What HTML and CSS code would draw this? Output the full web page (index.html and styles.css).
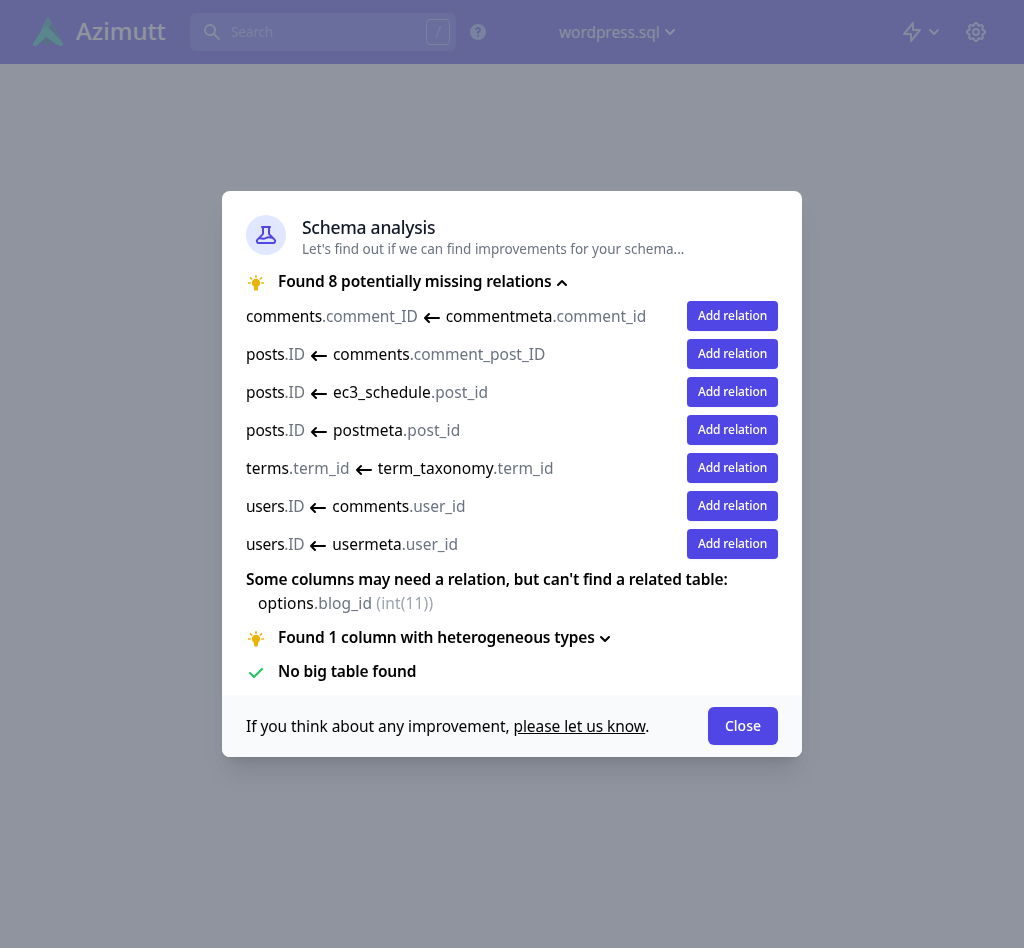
FILE: index.html
```html
<!DOCTYPE html>
<html lang="en">
<head>
<meta charset="utf-8">
<title>Azimutt</title>
<link rel="stylesheet" href="styles.css">
</head>
<body>
<svg class="defs" aria-hidden="true">
  <symbol id="chevron-down" viewBox="0 0 20 20"><path d="M5.293 7.293a1 1 0 011.414 0L10 10.586l3.293-3.293a1 1 0 111.414 1.414l-4 4a1 1 0 01-1.414 0l-4-4a1 1 0 010-1.414z"/></symbol>
  <symbol id="chevron-up" viewBox="0 0 20 20"><path d="M14.707 12.707a1 1 0 01-1.414 0L10 9.414l-3.293 3.293a1 1 0 01-1.414-1.414l4-4a1 1 0 011.414 0l4 4a1 1 0 010 1.414z"/></symbol>
  <symbol id="arrow" viewBox="0 0 20 20"><path d="M7.707 14.707a1 1 0 01-1.414 0l-4-4a1 1 0 010-1.414l4-4a1 1 0 011.414 1.414L5.414 9H17a1 1 0 110 2H5.414l2.293 2.293a1 1 0 010 1.414z"/></symbol>
  <symbol id="bulb" viewBox="0 0 20 20"><circle cx="10" cy="10" r="4.200"/><path d="M8 13h4v3.500a1 1 0 01-1 1H9a1 1 0 01-1-1z"/><path d="M10 2.700v1.600M2.500 10h1.700M15.800 10h1.700M4.500 4.800l1.100 1.100M15.500 4.800l-1.100 1.100" fill="none" stroke="currentColor" stroke-width="1.600" stroke-linecap="round"/></symbol>
</svg>

<nav class="navbar">
  <div class="brand">
    <svg class="logo" viewBox="0 0 32 32"><path fill="#2c9cac" d="M14 3.500Q16 -.5 18 3.500L31 27Q32 30.500 28.500 30L20 25.500L9 13Z"/><path fill="#2470a0" d="M19.500 7L29 24L15 11.500L18 11Z"/><path fill="#2468a0" d="M9 27.500L15 19L23 27Q16 29.500 9 27.500Z"/><path fill="#28c4b4" d="M1 27.500L10 13.500Q13 9 17 12L28 24Q31 28 30.500 30Q25 30 20 25L14 21L5 29.500Q0 31 1 27.500Z"/></svg>
    <span>Azimutt</span>
  </div>
  <div class="search">
    <svg class="i20" viewBox="0 0 20 20"><path fill-rule="evenodd" d="M8 4a4 4 0 100 8 4 4 0 000-8zM2 8a6 6 0 1110.89 3.476l4.817 4.817a1 1 0 01-1.414 1.414l-4.816-4.816A6 6 0 012 8z"/></svg>
    <span class="hint">Search</span>
    <kbd>/</kbd>
  </div>
  <svg class="i20 help" viewBox="0 0 20 20"><path fill-rule="evenodd" d="M18 10a8 8 0 11-16 0 8 8 0 0116 0zm-8-3a1 1 0 00-.867.5 1 1 0 11-1.731-1A3 3 0 0113 8a3.001 3.001 0 01-2 2.830V11a1 1 0 11-2 0v-1a1 1 0 011-1 1 1 0 100-2zm0 8a1 1 0 100-2 1 1 0 000 2z"/></svg>
  <div class="project"><span>wordpress.sql</span><svg class="i20"><use href="#chevron-down"/></svg></div>
  <div class="actions">
    <svg class="i24 line" viewBox="0 0 24 24"><path d="M13 10V3L4 14h7v7l9-11h-7z"/></svg>
    <svg class="i20"><use href="#chevron-down"/></svg>
    <svg class="i24 line cog" viewBox="0 0 24 24"><path d="M10.325 4.317c.426-1.756 2.924-1.756 3.350 0a1.724 1.724 0 002.573 1.066c1.543-.94 3.310.826 2.370 2.370a1.724 1.724 0 001.065 2.572c1.756.426 1.756 2.924 0 3.350a1.724 1.724 0 00-1.066 2.573c.94 1.543-.826 3.310-2.370 2.370a1.724 1.724 0 00-2.572 1.065c-.426 1.756-2.924 1.756-3.350 0a1.724 1.724 0 00-2.573-1.066c-1.543.94-3.310-.826-2.370-2.370a1.724 1.724 0 00-1.065-2.572c-1.756-.426-1.756-2.924 0-3.350a1.724 1.724 0 001.066-2.573c-.94-1.543.826-3.310 2.370-2.370.996.608 2.296.07 2.572-1.065z"/><path d="M15 12a3 3 0 11-6 0 3 3 0 016 0z"/></svg>
  </div>
</nav>

<div class="overlay">
  <section class="modal" role="dialog" aria-label="Schema analysis">
    <div class="content">
      <header class="heading">
        <div class="badge"><svg class="i24 line" viewBox="0 0 24 24"><path d="M19.428 15.428a2 2 0 00-1.022-.547l-2.387-.477a6 6 0 00-3.860.517l-.318.158a6 6 0 01-3.860.517L6.050 15.210a2 2 0 00-1.806.547M8 4h8l-1 1v5.172a2 2 0 00.586 1.414l5 5c1.260 1.260.367 3.414-1.415 3.414H4.828c-1.782 0-2.674-2.154-1.414-3.414l5-5A2 2 0 009 10.172V5L8 4z"/></svg></div>
        <div>
          <h3>Schema analysis</h3>
          <p>Let's find out if we can find improvements for your schema...</p>
        </div>
      </header>

      <h4 class="result first"><svg class="i20 warn"><use href="#bulb"/></svg><span>Found 8 potentially missing relations</span><svg class="i20 chev"><use href="#chevron-up"/></svg></h4>
      <ul class="relations">
        <li><div class="rel"><span>comments<i>.comment_ID</i></span><svg class="i20"><use href="#arrow"/></svg><span class="open">commentmeta<i>.comment_id</i></span></div><button class="add">Add relation</button></li>
        <li><div class="rel"><span>posts<i>.ID</i></span><svg class="i20"><use href="#arrow"/></svg><span class="open">comments<i>.comment_post_ID</i></span></div><button class="add">Add relation</button></li>
        <li><div class="rel"><span>posts<i>.ID</i></span><svg class="i20"><use href="#arrow"/></svg><span class="wide">ec3_schedule<i>.post_id</i></span></div><button class="add">Add relation</button></li>
        <li><div class="rel"><span>posts<i>.ID</i></span><svg class="i20"><use href="#arrow"/></svg><span class="wide">postmeta<i>.post_id</i></span></div><button class="add">Add relation</button></li>
        <li><div class="rel"><span class="wide">terms<i>.term_id</i></span><svg class="i20"><use href="#arrow"/></svg><span class="wide">term_taxonomy<i>.term_id</i></span></div><button class="add">Add relation</button></li>
        <li><div class="rel"><span class="tight">users<i>.ID</i></span><svg class="i20"><use href="#arrow"/></svg><span class="open">comments<i>.user_id</i></span></div><button class="add">Add relation</button></li>
        <li><div class="rel"><span class="tight">users<i>.ID</i></span><svg class="i20"><use href="#arrow"/></svg><span class="open">usermeta<i>.user_id</i></span></div><button class="add">Add relation</button></li>
      </ul>
      <h4 class="orphans">Some columns may need a relation, but can't find a related table:</h4>
      <div class="orphan">options<i>.blog_id</i> <em>(int(11))</em></div>
      <h4 class="result"><svg class="i20 warn"><use href="#bulb"/></svg><span>Found 1 column with heterogeneous types</span><svg class="i20 chev"><use href="#chevron-down"/></svg></h4>
      <h4 class="result"><svg class="i20 ok" viewBox="0 0 20 20"><path d="M16.707 5.293a1 1 0 010 1.414l-8 8a1 1 0 01-1.414 0l-4-4a1 1 0 011.414-1.414L8 12.586l7.293-7.293a1 1 0 011.414 0z"/></svg><span>No big table found</span></h4>
    </div>
    <footer>
      <p>If you think about any improvement, <a>please let us know</a>.</p>
      <button class="close">Close</button>
    </footer>
  </section>
</div>
</body>
</html>
```
FILE: styles.css
```css
* { box-sizing: border-box; margin: 0; padding: 0; }
body { height: 948px; overflow: hidden; background: #f9fafb; font: 15.5px/24px "Noto Sans", sans-serif; letter-spacing: -.15px; color: #000; }
i, em { font-style: normal; }
button { font-family: inherit; border: 0; color: #fff; background: #4f46e5; font-weight: 500; box-shadow: 0 1px 2px rgba(0,0,0,.05); }
svg { display: block; flex: none; fill: currentColor; }
.defs { display: none; }
.i20 { width: 20px; height: 20px; }
.i24 { width: 24px; height: 24px; }
.line { fill: none; stroke: currentColor; stroke-width: 2; stroke-linecap: round; stroke-linejoin: round; }

.navbar { display: flex; align-items: center; height: 64px; padding: 0 36px 0 32px; background: #4f46e5; color: #e0e7ff; }
.brand { display: flex; align-items: center; gap: 12px; width: 158px; font-size: 24px; line-height: 30px; font-weight: 500; letter-spacing: 0; color: #f9fafb; white-space: nowrap; }
.brand span { padding-bottom: 2px; }
.logo { width: 32px; height: 32px; }
.search { display: flex; align-items: center; width: 266px; height: 38px; padding: 6px 6px 6px 12px; border-radius: 6px; background: #6366f1; color: #c7d2fe; }
.hint { margin-left: 9px; flex: 1; font-size: 13.5px; color: #a5b4fc; }
.search kbd { width: 24px; height: 26px; border: 1px solid #a5b4fc; border-radius: 4px; color: #a5b4fc; font: 300 17px/24px "Noto Sans", sans-serif; text-align: center; }
.help { margin-left: 12px; color: #a5b4fc; }
.project { display: flex; align-items: center; margin-left: 71px; letter-spacing: -.07px; color: #e0e7ff; }
.actions { display: flex; align-items: center; margin-left: auto; color: #c7d2fe; }
.cog { margin-left: 20px; }

.overlay { position: fixed; inset: 0; display: flex; align-items: center; justify-content: center; background: rgba(107,114,128,.75); }
.modal { width: 580px; height: 566px; border-radius: 8px; overflow: hidden; background: #fff; box-shadow: 0 20px 25px -5px rgba(0,0,0,.1), 0 8px 10px -6px rgba(0,0,0,.1); }
.content { height: 504px; padding: 24px 24px 0; }
.heading { display: flex; gap: 16px; height: 44px; }
.badge { display: flex; align-items: center; justify-content: center; width: 40px; height: 40px; border-radius: 50%; background: #e0e7ff; color: #4f46e5; }
h3 { font-size: 17.5px; line-height: 24px; font-weight: 550; letter-spacing: -.25px; color: #111827; }
.heading p { font-size: 13.5px; line-height: 20px; letter-spacing: -.01px; color: #6b7280; white-space: nowrap; }
h4 { font-size: 15.5px; font-weight: 600; letter-spacing: -.15px; white-space: nowrap; }
.result { display: flex; align-items: center; height: 24px; margin-top: 10px; }
.result > svg:first-child { margin: 4px 12px 0 0; }
.warn { color: #eab308; }
.ok { color: #22c55e; }
.chev { margin-top: 4px; }
.relations { display: grid; gap: 8px; margin-top: 8px; list-style: none; }
.relations li { display: flex; align-items: center; justify-content: space-between; height: 30px; }
.rel { display: flex; align-items: center; gap: 4px; white-space: nowrap; }
.rel svg { margin-top: 4px; }
.open { letter-spacing: -.04px; }
.wide { letter-spacing: .09px; }
.tight { letter-spacing: -.25px; }
i { color: #6b7280; }
em { color: #9ca3af; }
.add { width: 91px; height: 30px; border-radius: 4px; font-size: 12px; line-height: 16px; letter-spacing: -.1px; }
.orphans { margin-top: 8px; }
.orphan { padding-left: 12px; letter-spacing: .15px; }
footer { display: flex; align-items: center; justify-content: space-between; height: 62px; padding: 12px 24px; background: #f9fafb; letter-spacing: -.07px; }
footer a { text-decoration: underline; }
.close { width: 70px; height: 38px; border-radius: 6px; font-size: 14px; line-height: 20px; }
```
